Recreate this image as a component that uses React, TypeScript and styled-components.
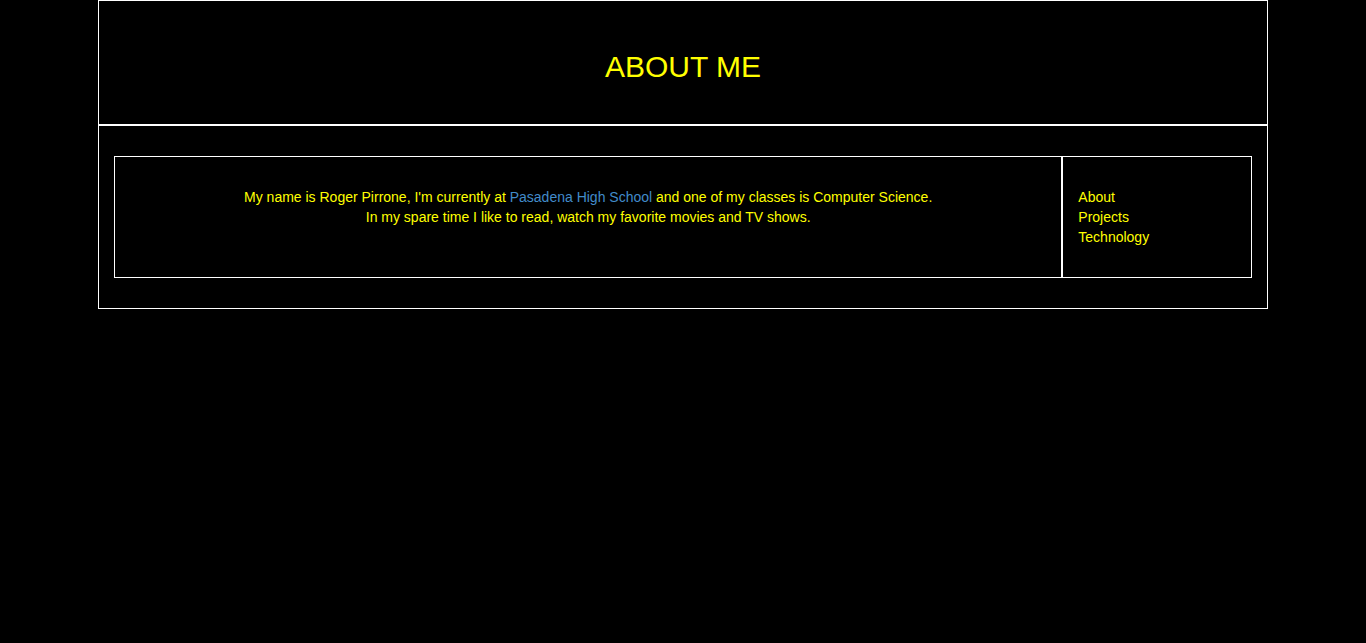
import React from "react";
import styled, { createGlobalStyle } from "styled-components";

const GlobalStyle = createGlobalStyle`
  html, body {
    margin: 0;
    padding: 0;
    background: #000;
    font-family: "Liberation Sans", Arial, Helvetica, sans-serif;
    font-size: 14px;
    line-height: 20px;
    color: #ffff00;
  }
  * { box-sizing: border-box; }
`;

const Container = styled.div`
  width: 1170px;
  margin: 0 auto;
`;

const Header = styled.header`
  height: 125px;
  border: 1px solid #fff;
  padding-top: 49px;
  text-align: center;
`;

const Title = styled.h1`
  margin: 0;
  font-size: 30px;
  line-height: 33px;
  font-weight: 400;
  color: #ffff00;
`;

const Content = styled.section`
  border: 1px solid #fff;
  padding: 30px 15px;
  display: flex;
`;

const Main = styled.div`
  width: 83.3333%;
  flex: none;
  border: 1px solid #fff;
  padding: 30px 15px;
  text-align: center;
`;

const Text = styled.p`
  margin: 0;
`;

const Link = styled.a`
  color: #428bca;
  text-decoration: none;
`;

const Sidebar = styled.nav`
  width: 16.6667%;
  flex: none;
  border: 1px solid #fff;
  padding: 30px 15px;
`;

const NavList = styled.ul`
  list-style: none;
  margin: 0;
  padding: 0;
`;

const NavItem = styled.li`
  line-height: 20px;
`;

const NavLink = styled.a`
  color: #ffff00;
  text-decoration: none;
`;

export default function App() {
  return (
    <>
      <GlobalStyle />
      <Container>
        <Header>
          <Title>ABOUT ME</Title>
        </Header>
        <Content>
          <Main>
            <Text>
              My name is Roger Pirrone, I'm currently at{" "}
              <Link href="#">Pasadena High School</Link> and one of my classes is
              Computer Science.
              <br />
              In my spare time I like to read, watch my favorite movies and TV shows.
            </Text>
          </Main>
          <Sidebar>
            <NavList>
              <NavItem><NavLink href="#">About</NavLink></NavItem>
              <NavItem><NavLink href="#">Projects</NavLink></NavItem>
              <NavItem><NavLink href="#">Technology</NavLink></NavItem>
            </NavList>
          </Sidebar>
        </Content>
      </Container>
    </>
  );
}
